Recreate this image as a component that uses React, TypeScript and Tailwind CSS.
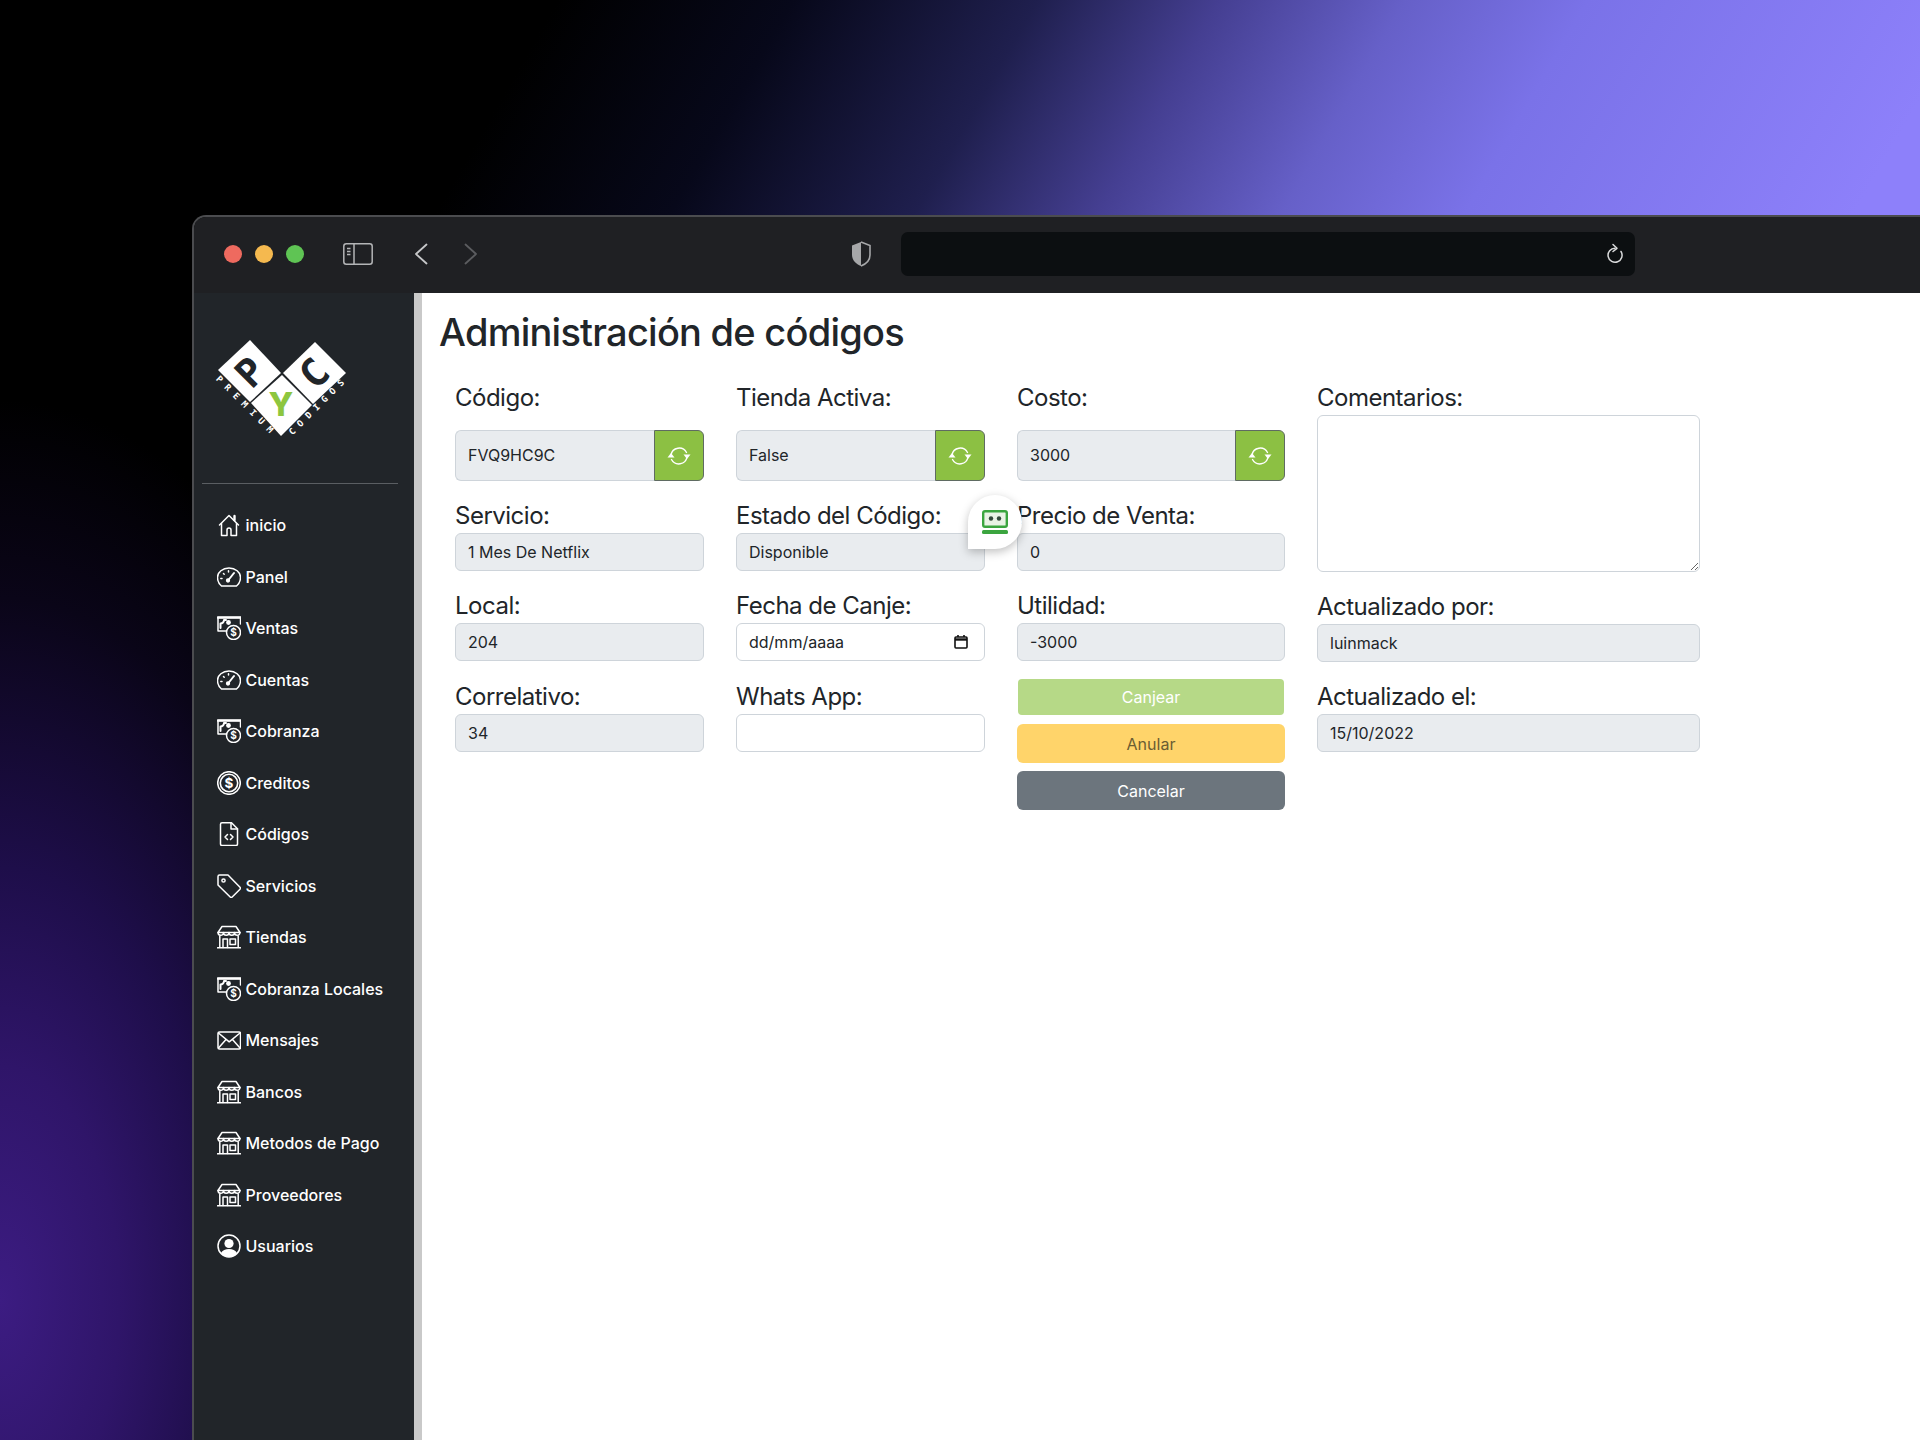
import type { ReactNode } from 'react';

const UI = "font-['Inter','Liberation_Sans',sans-serif]";

function Ico({ children }: { children: ReactNode }) {
  return (
    <svg viewBox="0 0 24 24" fill="none" stroke="white" strokeWidth="1.5" strokeLinecap="round" strokeLinejoin="round" className="w-6 h-6 shrink-0">
      {children}
    </svg>
  );
}

const Home = () => (
  <Ico>
    <path d="M2.5 12 12 2.5 21.5 12" />
    <path d="M4.5 10.5V22.5H10V17a2 2 0 0 1 4 0v5.5h5.5V10.5" />
    <path d="M17.5 3v4" strokeWidth="2.4" />
  </Ico>
);

const Gauge = () => (
  <Ico>
    <path d="M4.5 21h15c2-1.8 4-4.8 4-8.5A11.5 9.5 0 0 0 .5 12.5c0 3.7 2 6.7 4 8.5z" />
    <path d="M11 15.5 17 8" strokeWidth="2" />
    <circle cx="11" cy="15.5" r="1.4" fill="white" />
    <path d="M3.8 13.5h1.2M6.5 8.5l.7.7M11.5 5.8V7" />
  </Ico>
);

const Money = () => (
  <Ico>
    <path d="M9 15H1V1.5h22.5V8" strokeWidth="1.5" />
    <path d="M1 1.5h22.5" strokeWidth="2.6" />
    <path d="M3.5 12V7.5A3.5 3.5 0 0 0 7 4h2" strokeWidth="2" />
    <circle cx="11.5" cy="6.5" r="2.4" fill="white" stroke="none" />
    <circle cx="16.5" cy="16.5" r="7" />
    <text x="16.5" y="20" textAnchor="middle" fontSize="10" fontWeight="700" fill="white" stroke="none" fontFamily="Inter, sans-serif">$</text>
  </Ico>
);

const Coin = () => (
  <Ico>
    <circle cx="12" cy="12" r="11.3" />
    <circle cx="12" cy="12" r="8.7" strokeWidth="1.6" />
    <text x="12" y="16.8" textAnchor="middle" fontSize="13.5" fontWeight="700" fill="white" stroke="none" fontFamily="Inter, sans-serif">$</text>
  </Ico>
);

const FileCode = () => (
  <Ico>
    <path d="M5 .8h9.5l6 6V22a1.5 1.5 0 0 1-1.5 1.5H5A1.5 1.5 0 0 1 3.5 22V2.3A1.5 1.5 0 0 1 5 .8z" />
    <path d="M14 1v6h6.5" />
    <path d="m10.5 12.5-2.5 2.5 2.5 2.5M13.5 12.5l2.5 2.5-2.5 2.5" />
  </Ico>
);

const TagIcon = () => (
  <Ico>
    <path d="M2.5 1H11l12 12.2a1.4 1.4 0 0 1 0 2L15.2 23a1.4 1.4 0 0 1-2 0L1 11V2.5A1.5 1.5 0 0 1 2.5 1z" />
    <circle cx="6.5" cy="6.5" r="1.6" />
  </Ico>
);

const Store = () => (
  <Ico>
    <path d="M5 1.5h14l4 6H1z" />
    <path d="M1 7.5a2.75 2.75 0 0 0 5.5 0 2.75 2.75 0 0 0 5.5 0 2.75 2.75 0 0 0 5.5 0 2.75 2.75 0 0 0 5.5 0" />
    <path d="M2.8 11v11.5M21.2 11v11.5M.5 22.8h23" />
    <path d="M6 22.5V14h4.5v8.5" />
    <rect x="13" y="14" width="5.5" height="5.5" />
  </Ico>
);

const Mail = () => (
  <Ico>
    <rect x="1" y="4" width="22.5" height="17" rx="1.5" />
    <path d="m1.5 5 10.7 8.8L23 5M1.5 20l7.5-8.5M23 20l-7.5-8.5" />
  </Ico>
);

const User = () => (
  <Ico>
    <circle cx="12" cy="12" r="11" />
    <circle cx="12" cy="9.5" r="4.6" fill="white" stroke="none" />
    <path d="M3.8 19.2C5.5 16 8.5 15 12 15s6.5 1 8.2 4.2A11 11 0 0 1 12 23a11 11 0 0 1-8.2-3.8z" fill="white" stroke="none" />
  </Ico>
);

const NAV: { label: string; icon: ReactNode }[] = [
  { label: 'inicio', icon: <Home /> },
  { label: 'Panel', icon: <Gauge /> },
  { label: 'Ventas', icon: <Money /> },
  { label: 'Cuentas', icon: <Gauge /> },
  { label: 'Cobranza', icon: <Money /> },
  { label: 'Creditos', icon: <Coin /> },
  { label: 'Códigos', icon: <FileCode /> },
  { label: 'Servicios', icon: <TagIcon /> },
  { label: 'Tiendas', icon: <Store /> },
  { label: 'Cobranza Locales', icon: <Money /> },
  { label: 'Mensajes', icon: <Mail /> },
  { label: 'Bancos', icon: <Store /> },
  { label: 'Metodos de Pago', icon: <Store /> },
  { label: 'Proveedores', icon: <Store /> },
  { label: 'Usuarios', icon: <User /> },
];

function Logo() {
  return (
    <svg viewBox="0 0 128 97" className="w-32 h-[97px] overflow-visible">
      <polygon points="32,0 63,33 32,62 0,30" fill="white" />
      <polygon points="97,2 128,33 95,64 65,33" fill="white" />
      <polygon points="64,35 94,65 63,96 33,63" fill="white" />
      <text transform="translate(32 32) rotate(-45)" textAnchor="middle" y="14" fontSize="39" fontWeight="700" fill="#212529" fontFamily="'DejaVu Sans Mono', monospace">P</text>
      <text transform="translate(96 33) rotate(-45)" textAnchor="middle" y="14" fontSize="39" fontWeight="700" fill="#212529" fontFamily="'DejaVu Sans Mono', monospace">C</text>
      <text x="63" y="76" textAnchor="middle" fontSize="33" fontWeight="800" fill="#8dc63f" fontFamily="Inter, sans-serif">Y</text>
      <text transform="translate(-2.5 39.5) rotate(45)" fontSize="9" fontWeight="700" letterSpacing="6.4" fill="white" fontFamily="'DejaVu Sans Mono', monospace">PREMIUM</text>
      <text transform="translate(74.5 95.5) rotate(-45)" fontSize="9" fontWeight="700" letterSpacing="6" fill="white" fontFamily="'DejaVu Sans Mono', monospace">CODIGOS</text>
    </svg>
  );
}

function TitleBar() {
  return (
    <div className="h-[76px] pb-[3px] flex items-center bg-[#1f2023]">
      <div className="flex gap-[13px] ml-[30px]">
        <span className="w-[18px] h-[18px] rounded-full bg-[#ee6a5f]" />
        <span className="w-[18px] h-[18px] rounded-full bg-[#f5b94f]" />
        <span className="w-[18px] h-[18px] rounded-full bg-[#5fc454]" />
      </div>
      <svg viewBox="0 0 30 22" fill="none" className="w-[30px] h-[22px] ml-[39px]" stroke="#b4b5b7" strokeWidth="1.5">
        <rect x="0.8" y="0.8" width="28.4" height="20.4" rx="2.5" />
        <path d="M11 1v20" />
        <path d="M4 5.5h3.5M4 8.5h3.5M4 11.5h3.5" />
      </svg>
      <svg viewBox="0 0 14 22" fill="none" className="w-[14px] h-[22px] ml-[41px]" stroke="#c6c7c9" strokeWidth="1.8" strokeLinecap="round" strokeLinejoin="round">
        <path d="M12.5 1.5 2 11l10.5 9.5" />
      </svg>
      <svg viewBox="0 0 14 22" fill="none" className="w-[14px] h-[22px] ml-[36px]" stroke="#5b5c5f" strokeWidth="1.8" strokeLinecap="round" strokeLinejoin="round">
        <path d="M1.5 1.5 12 11 1.5 20.5" />
      </svg>
      <svg viewBox="0 0 22 26" className="w-[22px] h-[26px] ml-[372px]" fill="none">
        <path d="M11 1 2 4.5V14c0 5 4 9 9 11z" fill="#a6a7a9" />
        <path d="M11 1l9 3.5V14c0 5-4 9-9 11" stroke="#a6a7a9" strokeWidth="1.6" />
      </svg>
      <div className="ml-[29px] w-[734px] h-[44px] rounded-[7px] bg-[#0c0f11] flex items-center justify-end pr-[10px]">
        <svg viewBox="0 0 20 24" fill="none" className="w-5 h-6" stroke="#d9dadb" strokeWidth="1.5" strokeLinecap="round" strokeLinejoin="round">
          <path d="M16 9.5A7 7 0 1 1 10 6.2" />
          <path d="M8 2.5 12 6.3 8 9.5" />
        </svg>
      </div>
    </div>
  );
}

function Sidebar() {
  return (
    <aside className={`w-[220px] shrink-0 bg-[#212529] text-white ${UI}`}>
      <div className="pt-[47px] pl-6">
        <Logo />
      </div>
      <div className="h-px w-[196px] bg-[#5a5e62] ml-2 mt-[46px]" />
      <nav className="mt-[15.5px] pl-[23px] flex flex-col">
        {NAV.map(item => (
          <a key={item.label} className="h-[51.5px] flex items-center gap-[4.5px] text-base font-medium">
            {item.icon}
            <span>{item.label}</span>
          </a>
        ))}
      </nav>
    </aside>
  );
}

const labelCls = 'block h-9 text-2xl tracking-[-0.5px] text-[#212529]';
const inputCls = 'block w-full h-[38px] px-3 rounded-md border border-[#ced4da] text-base text-[#212529] outline-none';

function Field({ label, value, white }: { label: string; value?: string; white?: boolean }) {
  return (
    <div className="mb-[16.2px]">
      <label className={`${labelCls} leading-[38px]`}>{label}</label>
      <input readOnly value={value ?? ''} className={`${inputCls} ${white ? 'bg-white' : 'bg-[#e9ecef]'}`} />
    </div>
  );
}

function Sync() {
  return (
    <button className="w-[50px] h-full shrink-0 flex items-center justify-center rounded-r-md border border-[#5f6b62] bg-[#8cc043]">
      <svg viewBox="0 0 24 24" fill="none" className="w-6 h-6" stroke="white" strokeWidth="1.4" strokeLinecap="round">
        <path d="M4 11a8.3 8.3 0 0 1 15.5-2.5" />
        <path d="M20 13a8.3 8.3 0 0 1-15.5 2.5" />
        <path d="M16.5 10.5h7L20 15z" fill="white" stroke="none" />
        <path d="M.5 13.5h7L4 9z" fill="white" stroke="none" />
      </svg>
    </button>
  );
}

function GroupField({ label, value }: { label: string; value: string }) {
  return (
    <div className="mb-[16.2px]">
      <label className={`${labelCls} leading-9`}>{label}</label>
      <div className="flex h-[51px] mt-[14px]">
        <input readOnly value={value} className="min-w-0 flex-1 h-full px-3 pb-px rounded-l-md border border-r-0 border-[#ced4da] bg-[#e9ecef] text-base text-[#212529] outline-none" />
        <Sync />
      </div>
    </div>
  );
}

function DateField() {
  return (
    <div className="mb-[16.2px]">
      <label className={`${labelCls} leading-[38px]`}>Fecha de Canje:</label>
      <div className="h-[38px] px-3 rounded-md border border-[#ced4da] bg-white flex items-center justify-between text-base text-[#212529]">
        <span>dd/mm/aaaa</span>
        <svg viewBox="0 0 14 14" className="w-[14px] h-[14px] mr-1" fill="none" stroke="#111" strokeWidth="1.6">
          <rect x="1" y="2" width="12" height="11" rx="1" />
          <path d="M1 4.5h12" strokeWidth="2.4" />
          <path d="M4 0v2M10 0v2" />
        </svg>
      </div>
    </div>
  );
}

function Form() {
  return (
    <div className="flex gap-8 pl-[33px] mt-6">
      <div className="w-[249px]">
        <GroupField label="Código:" value="FVQ9HC9C" />
        <Field label="Servicio:" value="1 Mes De Netflix" />
        <Field label="Local:" value="204" />
        <Field label="Correlativo:" value="34" />
      </div>
      <div className="w-[249px]">
        <GroupField label="Tienda Activa:" value="False" />
        <div className="relative">
          <Field label="Estado del Código:" value="Disponible" />
          <div className="absolute left-[232px] top-[-2px] z-10 w-[54px] h-[54px] bg-white rounded-t-[27px] rounded-br-[27px] shadow-[0_3px_10px_rgba(0,0,0,0.25)] flex items-center justify-center">
            <svg viewBox="0 0 26 24" className="w-[26px] h-6">
              <rect x="1.2" y="1.2" width="23.6" height="15.6" rx="1.8" fill="#e9f3e5" stroke="#3ba53f" strokeWidth="2.4" />
              <circle cx="9" cy="8.5" r="2.2" fill="#33493a" />
              <circle cx="17" cy="8.5" r="2.2" fill="#33493a" />
              <rect x="0" y="20" width="26" height="4" rx="1.5" fill="#3ba53f" />
            </svg>
          </div>
        </div>
        <DateField />
        <Field label="Whats App:" white />
      </div>
      <div className="w-[268px]">
        <GroupField label="Costo:" value="3000" />
        <Field label="Precio de Venta:" value="0" />
        <Field label="Utilidad:" value="-3000" />
        <div className="flex flex-col items-stretch pt-[1.5px] text-base">
          <button className="h-9 mx-px rounded bg-[#b6d987] text-white">Canjear</button>
          <button className="h-[39px] mt-[9px] rounded-md bg-[#ffd46a] text-[#6b5d33]">Anular</button>
          <button className="h-[39px] mt-2 rounded-md bg-[#6c757d] text-white">Cancelar</button>
        </div>
      </div>
      <div className="w-[383px]">
        <label className={`${labelCls} leading-9`}>Comentarios:</label>
        <textarea readOnly className="block w-full h-[157px] -mt-px mb-4 rounded-md border border-[#ced4da] bg-white outline-none" />
        <Field label="Actualizado por:" value="luinmack" />
        <Field label="Actualizado el:" value="15/10/2022" />
      </div>
    </div>
  );
}

export default function App() {
  return (
    <div className="h-[1440px] overflow-hidden pt-[215px] pl-[192px] bg-no-repeat bg-[length:100%_215px,100%_100%] bg-[linear-gradient(120deg,#000_483px,#07081a_687px,#1f1f4e_899px,#453f92_1057px,#6660c8_1217px,#7a72e8_1375px,#8d80fa_1713px),radial-gradient(ellipse_460px_900px_at_0px_1300px,#3c1c82_0%,#2f1569_26%,#1e0e4a_48%,#0a0518_78%,#000_100%)]">
      <div className="h-full flex flex-col rounded-tl-[14px] border-l-2 border-t-2 border-[#4b4c4f] overflow-hidden">
        <TitleBar />
        <div className="flex-1 flex min-h-0">
          <Sidebar />
          <div className="w-2 shrink-0 bg-[#c9c9c9]" />
          <main className={`flex-1 bg-white pt-[15px] ${UI}`}>
            <h1 className="pl-[17px] text-[38px] leading-[48px] font-medium tracking-[-0.75px] text-[#212529]">Administración de códigos</h1>
            <Form />
          </main>
        </div>
      </div>
    </div>
  );
}
